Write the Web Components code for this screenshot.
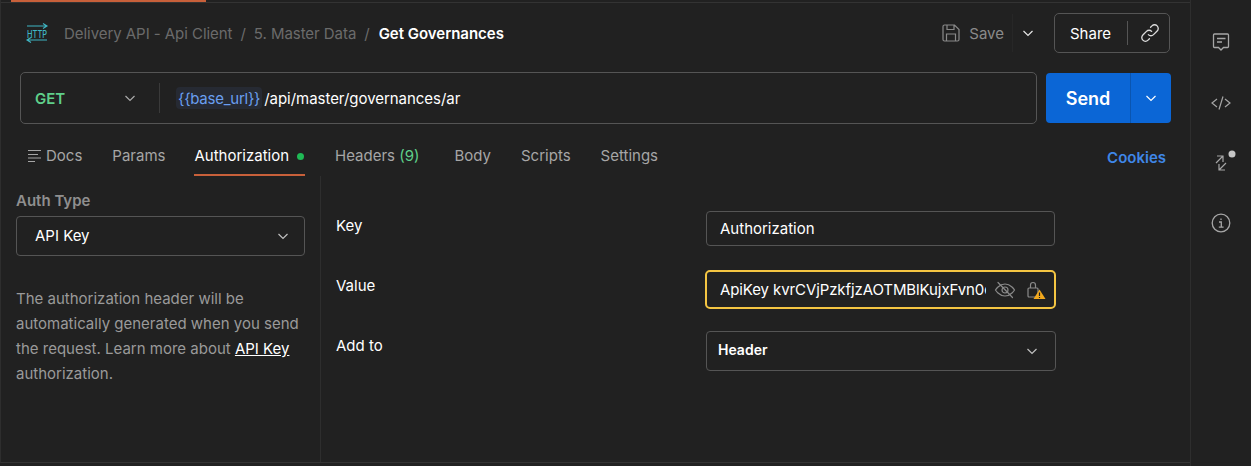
<!DOCTYPE html>
<html>
<head>
<meta charset="utf-8">
<style>
  html, body { margin: 0; height: 100%; background: #212121; overflow: hidden; }
  body { font: 15px/20px Inter, "Liberation Sans", sans-serif; color: #fff; }
</style>
</head>
<body>
<pm-app>
  <pm-header></pm-header>
  <pm-urlbar></pm-urlbar>
  <pm-tabs></pm-tabs>
  <pm-auth></pm-auth>
  <pm-rail slot="rail"></pm-rail>
</pm-app>

<script>
const chevron = (size = 16, color = "#c8c8c8") => `<svg width="${size}" height="${size}" viewBox="0 0 16 16" fill="none" stroke="${color}" stroke-width="1.2"><path d="M3.5 6l4.5 4.5L12.5 6"/></svg>`;

class PmApp extends HTMLElement {
    connectedCallback() {
        this.attachShadow({ mode: "open" }).innerHTML = `<style>
            :host { display: flex; width: 1251px; height: 466px; box-sizing: border-box; }
            .main { width: 1190px; height: 463px; box-sizing: border-box; border-left: 1px solid #2e2e2e; border-bottom: 1px solid #333; flex: none; }
            .strip { height: 2px; border-bottom: 1px solid #333; display: flex; }
            .strip i { display: block; width: 195px; height: 2px; margin-left: 10px; background: #c8603a; }
            .rail { flex: 1; border-left: 1px solid #2e2e2e; }
        </style>
        <div class="main"><div class="strip"><i></i></div><slot></slot></div>
        <div class="rail"><slot name="rail"></slot></div>`;
    }
}

class PmHeader extends HTMLElement {
    connectedCallback() {
        this.attachShadow({ mode: "open" }).innerHTML = `<style>
            :host { display: flex; align-items: center; box-sizing: border-box; height: 69px; padding: 0 20px 9px 25px; }
            .http { width: 23px; height: 24px; margin-right: 15px; flex: none; overflow: visible; }
            .crumbs { display: flex; gap: 8px; color: #6b6b6b; flex: 1; letter-spacing: -.05px; margin-top: 2px; }
            .crumbs b { color: #fff; font-weight: 600; letter-spacing: -.02px; margin-left: 1px; }
            .save { display: flex; align-items: center; color: #8a8a8a; gap: 8px; }
            .save span { margin-top: 2px; }
            .caret { display: flex; align-items: center; justify-content: center; width: 30px; height: 38px; margin: 0 11px 0 8px; border-left: 1px solid #272727; }
            .share { display: flex; align-items: center; box-sizing: border-box; width: 116px; height: 40px; border: 1px solid #555; border-radius: 5px; }
            .share span { width: 71px; padding-right: 1px; box-sizing: content-box; text-align: center; margin-top: 2px; }
            .share i { width: 1px; height: 24px; background: #555; }
            .share svg { margin-left: 11px; }
        </style>
        <svg class="http" viewBox="0 0 23 24" fill="none" stroke="#3fb6c4" stroke-width="1.100">
          <path d="M1 5h20M17 2.500L21 5l-4 2.500M21 19H1M5 16.500L1 19l4 2.500"/>
          <text x="1" y="16.500" font-family="Inter, sans-serif" font-size="11" font-weight="500" fill="#3fb6c4" stroke="none" textLength="20" lengthAdjust="spacingAndGlyphs">HTTP</text>
        </svg>
        <div class="crumbs"><span>Delivery API - Api Client</span><span>/</span><span>5. Master Data</span><span>/</span><b>Get Governances</b></div>
        <div class="save">
          <svg width="20" height="20" viewBox="0 0 20 20" fill="none" stroke="#8a8a8a" stroke-width="1.200"><path d="M2 3.500A1.500 1.500 0 0 1 3.500 2h10L18 6.500v10a1.500 1.500 0 0 1-1.500 1.500h-13A1.500 1.500 0 0 1 2 16.500zM6 2v4.500h7V2M5.500 18v-7h9v7"/></svg>
          <span>Save</span>
        </div>
        <div class="caret">${chevron(16, "#e6e6e6")}</div>
        <div class="share"><span>Share</span><i></i>
          <svg width="22" height="22" viewBox="0 0 20 20" fill="none" stroke="#dcdcdc" stroke-width="1.200" stroke-linecap="round"><path d="M8.500 11.500a3.300 3.300 0 0 0 4.700 0l3.300-3.300a3.300 3.300 0 0 0-4.700-4.700l-1.300 1.300M11.500 8.500a3.300 3.300 0 0 0-4.700 0l-3.300 3.300a3.300 3.300 0 0 0 4.700 4.700l1.300-1.300"/></svg>
        </div>`;
    }
}

class PmUrlbar extends HTMLElement {
    connectedCallback() {
        this.attachShadow({ mode: "open" }).innerHTML = `<style>
            :host { display: flex; gap: 9px; height: 52px; padding: 0 19px; align-items: center; }
            .bar { flex: 1; display: flex; align-items: center; height: 52px; box-sizing: border-box; border: 1px solid #555; border-radius: 5px; }
            .method { width: 138px; box-sizing: border-box; padding: 0 21px 0 14px; display: flex; justify-content: space-between; align-items: center; color: #5fcf8a; font-weight: 600; }
            .method span { margin-top: 2px; }
            .sep { width: 1px; height: 30px; background: #3a3a3a; margin-right: 16px; }
            .var { color: #6a9ff0; background: #262a33; border-radius: 4px; padding: 2px 2px 0; margin-right: 2px; letter-spacing: -.25px; }
            .path { margin-top: 2px; letter-spacing: -.04px; }
            .send { display: flex; width: 125px; height: 50px; background: #0b66d6; border-radius: 4px; font-weight: 600; font-size: 18px; }
            .send span { width: 84px; line-height: 51px; text-align: center; border-right: 1px solid #0a55b0; }
            .send div { flex: 1; display: flex; align-items: center; justify-content: center; }
        </style>
        <div class="bar">
          <div class="method"><span>GET</span>${chevron(16, "#aaa")}</div><i class="sep"></i>
          <span class="var">{{base_url}}</span><span class="path">/api/master/governances/ar</span>
        </div>
        <div class="send"><span>Send</span><div>${chevron(16, "#fff")}</div></div>`;
    }
}

class PmTabs extends HTMLElement {
    connectedCallback() {
        this.attachShadow({ mode: "open" }).innerHTML = `<style>
            :host { display: flex; align-items: flex-start; height: 52px; padding: 20px 24px 0 26px; box-sizing: border-box; color: #a6a6a6; gap: 30px; }
            .tab { display: flex; height: 31px; box-sizing: border-box; line-height: 24px; align-items: flex-start; }
            .active { color: #fff; border-bottom: 2px solid #c8603a; height: 32px; margin-left: -1px; padding-right: 1px; }
            .dot { width: 7px; height: 7px; background: #1fb955; border-radius: 50%; margin: 9px 0 0 8px; }
            .docs svg { margin: 4px 5px 0 0; }
            .headers { margin-right: 5px; }
            em { font-style: normal; color: #5fcf8a; }
            .cookies { margin-left: auto; color: #3f87e8; font-weight: 600; line-height: 28px; }
        </style>
        <div class="tab docs">
          <svg width="14" height="16" viewBox="0 0 14 16" stroke="#a6a6a6" stroke-width="1.200"><path d="M1 2.500h13M1 6.500h10M1 10h13M1 13.500h7"/></svg>Docs</div>
        <div class="tab">Params</div>
        <div class="tab active">Authorization<i class="dot"></i></div>
        <div class="tab headers">Headers&nbsp;<em>(9)</em></div>
        <div class="tab">Body</div>
        <div class="tab">Scripts</div>
        <div class="tab">Settings</div>
        <div class="cookies">Cookies</div>`;
    }
}

class PmSelect extends HTMLElement {
    connectedCallback() {
        this.attachShadow({ mode: "open" }).innerHTML = `<style>
            :host { display: flex; align-items: center; justify-content: space-between; box-sizing: border-box; border: 1px solid #555; border-radius: 4px; padding: 0 var(--pad-right, 13px) 0 var(--pad, 18px); height: 40px; }
        </style><slot></slot>${chevron(16, "#c0c0c0")}`;
    }
}

class PmAuth extends HTMLElement {
    connectedCallback() {
        this.attachShadow({ mode: "open" }).innerHTML = `<style>
            :host { display: flex; height: 286px; }
            .side { width: 320px; box-sizing: border-box; padding: 15px 15px 0 15px; border-right: 1px solid #2e2e2e; flex: none; }
            h4 { margin: 0 0 5px; font-size: 15px; font-weight: 600; color: #8f8f8f; line-height: 20px; }
            p { margin: 30px 0 0; color: #9a9a9a; line-height: 25px; }
            a { color: #fff; text-decoration: underline; }
            .form { display: grid; grid-template-columns: 370px 350px; grid-template-rows: 59px 61px 40px; padding: 35px 0 0 15px; align-content: start; align-items: start; }
            .form > span { line-height: 28px; margin-top: 1px; }
            .input { box-sizing: border-box; height: 35px; border: 1px solid #555; border-radius: 4px; padding: 0 13px; line-height: 33px; }
            .key { width: 349px; }
            .value { margin-left: -1px; width: 351px; height: 39px; display: flex; align-items: center; border: 2px solid #f4c542; border-radius: 5px; box-sizing: border-box; padding: 0 8px 0 13px; }
            .value span { width: 266px; overflow: hidden; white-space: nowrap; flex: none; letter-spacing: -.1px; }
            .value svg { flex: none; }
            .form pm-select { font-weight: 600; font-size: 14px; --pad: 11px; --pad-right: 15px; width: 350px; }
            .form pm-select span { margin-top: -2px; }
            .warn-wrap { margin-left: 11px; }
            .eye { margin-left: 8px; }
        </style>
        <div class="side">
          <h4>Auth Type</h4>
          <pm-select>API Key</pm-select>
          <p>The authorization header will be automatically generated when you send the request. Learn more about <a>API Key</a> authorization.</p>
        </div>
        <div class="form">
          <span>Key</span><div class="input key">Authorization</div>
          <span style="margin-top:2px">Value</span>
          <div class="value"><span>ApiKey kvrCVjPzkfjzAOTMBlKujxFvn0c</span>
            <svg class="eye" width="22" height="20" viewBox="0 0 22 20" fill="none" stroke="#8a8a8a" stroke-width="1.200" stroke-linecap="round"><path d="M1.500 10s3.500-6 9.500-6 9.500 6 9.500 6-3.500 6-9.500 6-9.500-6-9.500-6z"/><circle cx="11" cy="10" r="3"/><path d="M4 2.500l14.500 15"/></svg>
            <svg class="warn-wrap" width="19" height="20" viewBox="0 0 19 20" fill="none" stroke="#8a8a8a" stroke-width="1.200"><rect x="1" y="8" width="10" height="9" rx="1"/><path d="M3.500 8V5a2.500 2.500 0 0 1 5 0v3"/><path d="M12.500 9.500l6 9.500h-12z" fill="#f2a81d" stroke="none"/><path d="M12.500 12.500v3.500M12.500 17v1" stroke="#212121"/></svg>
          </div>
          <span>Add to</span><pm-select><span>Header</span></pm-select>
        </div>`;
    }
}

class PmRail extends HTMLElement {
    connectedCallback() {
        this.attachShadow({ mode: "open" }).innerHTML = `<style>
            :host { display: flex; flex-direction: column; align-items: center; gap: 41px; padding: 32px 0 0 0; }
            svg { display: block; overflow: visible; }
        </style>
        <svg width="20" height="20" viewBox="0 0 20 20" fill="none" stroke="#a6a6a6" stroke-width="1.300"><path d="M3.500 2h13a1 1 0 0 1 1 1v11.500a1 1 0 0 1-1 1H12.500L10 18l-2.500-2.500h-4a1 1 0 0 1-1-1V3a1 1 0 0 1 1-1zM6 6.500h8.500M6 10h5"/></svg>
        <svg width="20" height="20" viewBox="0 0 20 20" fill="none" stroke="#a6a6a6" stroke-width="1.200"><path d="M6 6l-5 4 5 4M14 6l5 4-5 4M12 3.500L8 16.500"/></svg>
        <svg width="28" height="20" viewBox="0 0 28 20" fill="none" stroke="#a6a6a6" stroke-width="1.200" style="margin-top:-2px"><path d="M9 11l7-7M10 4h6v6M19 11l-7 7M12 12v6h6"/><circle cx="25" cy="2" r="3.500" fill="#c6c6c6" stroke="none"/></svg>
        <svg width="20" height="20" viewBox="0 0 20 20" fill="none" stroke="#a6a6a6" stroke-width="1.300"><circle cx="10" cy="10" r="8.800"/><path d="M8 9h2.300v5M7.800 14.200h4.800M10 5.500v1.400"/></svg>`;
    }
}

customElements.define("pm-app", PmApp);
customElements.define("pm-header", PmHeader);
customElements.define("pm-urlbar", PmUrlbar);
customElements.define("pm-tabs", PmTabs);
customElements.define("pm-select", PmSelect);
customElements.define("pm-auth", PmAuth);
customElements.define("pm-rail", PmRail);
</script>
</body>
</html>
